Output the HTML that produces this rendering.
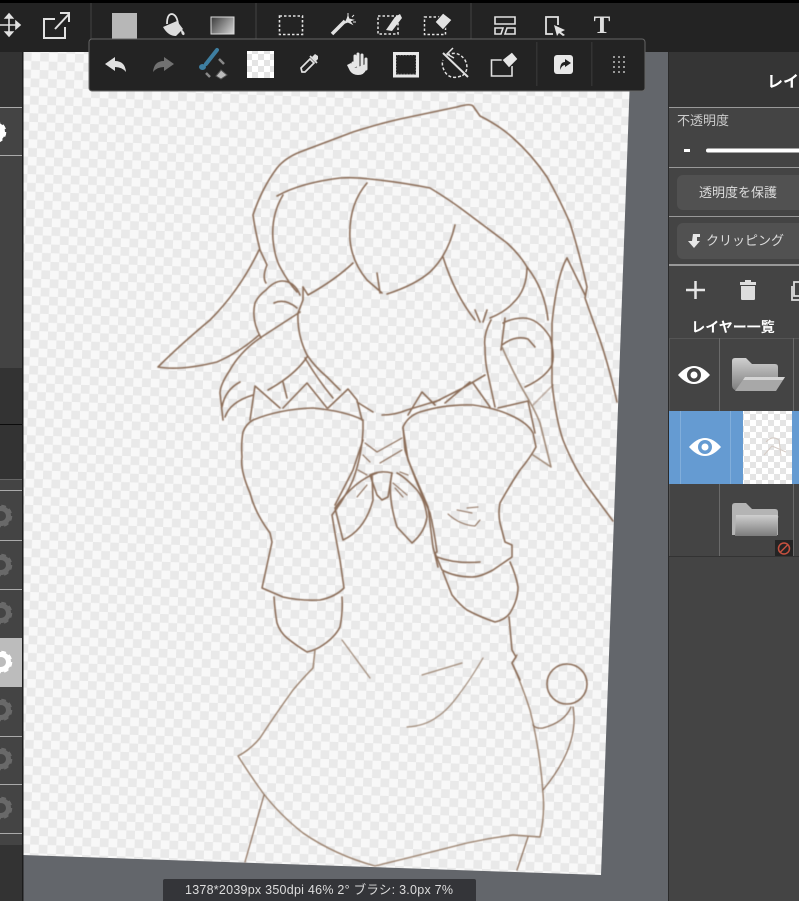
<!DOCTYPE html>
<html><head><meta charset="utf-8"><style>
html,body{margin:0;padding:0;background:#63666b}
body{width:799px;height:901px;overflow:hidden;position:relative}
svg{position:absolute;left:0;top:0}
text{font-family:"Liberation Sans","Noto Sans CJK JP",sans-serif}
</style></head><body>
<svg width="799" height="901" viewBox="0 0 799 901" xmlns="http://www.w3.org/2000/svg">
<defs>
<pattern id="ck" width="17.4" height="17.4" patternUnits="userSpaceOnUse" patternTransform="translate(23 52) rotate(2)">
<rect width="17.4" height="17.4" fill="#f8f8f8"/><rect width="8.7" height="8.7" fill="#e9e9e9"/><rect x="8.7" y="8.7" width="8.7" height="8.7" fill="#e9e9e9"/>
</pattern>
<pattern id="ck2" width="12" height="12" patternUnits="userSpaceOnUse"><rect width="12" height="12" fill="#fff"/><rect width="6" height="6" fill="#e4e4e4"/><rect x="6" y="6" width="6" height="6" fill="#e4e4e4"/></pattern>
<linearGradient id="gr" x1="0" x2="1" y1="0.2" y2="0.8"><stop offset="0" stop-color="#444"/><stop offset="1" stop-color="#ccc"/></linearGradient>
<linearGradient id="fd" x1="0" x2="0" y1="0" y2="1"><stop offset="0" stop-color="#cfcfcf"/><stop offset="1" stop-color="#7c7c7c"/></linearGradient>
<filter id="sf"><feGaussianBlur stdDeviation="0.4"/></filter>
<g id="gear"><circle r="7.5" fill="none" stroke="currentColor" stroke-width="5"/><circle r="9.5" fill="none" stroke="currentColor" stroke-width="3.6" stroke-dasharray="4.4 3.06"/></g>
<g id="eye"><path d="M-16 0Q0-18 16 0Q0 18-16 0Z" fill="#fff"/></g>
</defs>

<!-- canvas background -->
<rect width="799" height="901" fill="#63666b"/>
<path d="M23 50H631L601 875L23 855Z" fill="url(#ck)"/>

<!-- line art -->
<g fill="none" stroke="#8b6d58" stroke-width="1.6" stroke-linecap="round" stroke-linejoin="round" filter="url(#sf)">
<!-- hat outer -->
<path d="M266 283Q262 277 267 265L260 250Q255 230 253 215Q262 188 277 168Q285 158 300 152L353 132Q378 124 400 119L457 107Q470 103 473 106L480 116Q500 126 513 138Q532 155 547 177Q560 200 570 223Q580 255 587 287L585 298Q592 318 600 340Q610 370 617 402"/>
<path d="M259 250Q240 290 210 320Q180 345 158 367Q180 371 217 362Q240 352 259 335"/>
<path d="M277 196Q300 183 340 178Q355 177 370 179Q400 182 430 188Q450 200 467 213L507 243Q520 255 527 267Q545 290 548 320"/>
<path d="M283 195Q271 215 273 240Q275 258 280 267Q288 282 297 292"/>
<path d="M367 183Q348 205 350 240Q352 262 367 280L382 293"/>
<path d="M377 273L380 293M387 294Q415 285 430 272Q448 255 455 225"/>
<path d="M353 263Q335 280 308 295L303 287"/>
<path d="M443 257Q455 295 475 320M475 310L480 322M487 310L483 322M490 318Q505 312 513 303Q527 290 527 267"/>
<!-- face left -->
<path d="M303 287V300L298 313Q297 335 307 355Q315 367 327 377L340 390M305 358Q318 380 333 398"/>
<path d="M261 338Q251 320 255 303Q258 296 266 290Q277 278 288 282Q296 285 300 295M274 303Q285 298 297 308"/>
<path d="M300 312Q280 325 260 338Q240 352 230 370Q220 385 220 393L223 420M240 382Q225 390 222 407M253 395Q230 402 225 417"/>
<path d="M307 357Q295 375 268 390M283 382L287 398"/>
<path d="M250 420L255 386L280 408M283 408L307 383L327 408M328 408L348 389L357 400L362 420M357 402L373 412M382 415Q395 415 407 410L440 400"/>
<!-- left arm -->
<path d="M243 432Q246 424 253 420Q280 409 313 408Q345 411 363 420L363 430Q362 455 353 480Q345 498 332 515Q336 540 340 560L344 588Q335 597 320 600Q300 601 283 597L262 588L272 542L270 533Q255 513 250 493Q240 470 242 457Q241 443 243 432Z"/>
<path d="M274 597Q275 612 277 623Q280 632 287 638Q297 646 307 652Q316 650 323 645Q335 637 340 627Q343 612 342 597"/>
<path stroke="#9a806c" stroke-width="1.4" d="M315 650Q314 660 313 668Q303 678 293 690Q275 715 260 738Q250 750 238 756Q250 775 263 793Q280 815 303 833Q335 855 375 866Q420 855 467 843Q490 838 513 835L540 837Q545 815 543 793Q540 750 530 710Q522 685 512 663L517 655"/>
<path d="M342 640L370 678M422 675L462 663M483 658Q470 680 460 693Q448 710 437 717Q425 726 407 727" stroke="#a08a78" stroke-width="1.200"/>
<!-- tail -->
<circle cx="567" cy="684" r="20"/>
<path d="M571 707Q565 722 543 728Q536 729 533 725M573 707Q580 745 543 790" stroke-width="1.200"/>
<path d="M264 795L245 862M528 837L517 870" stroke-width="1.200"/>
<!-- right strand -->
<path d="M567 258Q557 275 552 323V383Q556 420 563 440Q575 470 590 490L613 521"/>
<path d="M567 258L585 295"/>
<path d="M503 323Q513 318 523 318Q538 318 550 337Q555 355 552 365Q545 378 525 387M502 345Q515 335 528 339L535 347M505 318L501 350"/>
<path d="M502 347Q512 370 523 390Q535 410 540 423L551 467L533 455" stroke="#a08a78"/>
<path d="M553 385L533 405" stroke-opacity=".5"/>
<!-- neck -->
<path d="M491 320Q483 335 485 347Q485 360 487 370L495 407M485 375L463 388L433 403M470 382L445 403M473 383L490 407"/>
<path d="M408 415L422 392L435 405M498 408L528 401L535 433"/>
<!-- right arm -->
<path d="M403 427Q408 416 420 412Q445 404 473 405Q495 408 510 415Q528 423 533 433L536 447Q530 458 520 470Q510 485 500 503Q498 513 500 523L505 542L512 545L512 557L493 570Q480 577 472 577Q455 577 442 570L435 553L437 552Q434 530 430 513Q422 495 417 483Q408 460 405 450Z"/>
<path d="M437 557Q455 564 480 562M443 572Q448 585 452 595Q460 605 467 610Q480 617 495 622Q505 620 510 613Q518 600 518 587Q516 575 510 562"/>
<path d="M509 617L512 650L516 657L512 663L520 680"/>
<path d="M448 514Q460 525 475 526L480 520M457 510L472 513M467 508L478 507" stroke-width="1"/>
<!-- ribbon -->
<path d="M377 473Q355 480 335 508L343 540Q365 530 373 500L372 475"/>
<path d="M370 475L377 495L382 500L388 497L392 473Q380 470 370 475"/>
<path d="M392 473Q387 495 397 527L412 543Q425 532 427 517Q425 500 417 490Q405 477 397 473"/>
<path d="M365 443L377 452L402 438M363 455L370 462M402 450L380 463M358 470L367 475M400 472L408 475M357 497L367 485M393 483L407 495M395 488L403 497" stroke-width="1.100"/>
<path d="M403 428L408 460L428 507L433 547L438 567M363 440L353 470L335 505"/>
</g>

<!-- top bar -->
<rect width="799" height="52" fill="#232323"/>
<rect width="799" height="3" fill="#000"/>
<rect x="90" y="3" width="2" height="36" fill="#333"/><rect x="255" y="3" width="2" height="36" fill="#333"/><rect x="470" y="3" width="2" height="36" fill="#333"/>

<!-- top icons -->
<g fill="none" stroke="#e2e2e2" stroke-width="1.6">
<path d="M0 25H18M9 16V34M9 14l-3.500 4h7zM9 36l-3.500-4h7zM20 25l-4-3.500v7z" fill="#e2e2e2"/>
<path d="M55 19H44V38H65V27" stroke-width="2"/><path d="M55 29L69 14M60 13H69V22" stroke-width="2"/>
<rect x="112" y="13" width="25" height="26" fill="#b7b7b7" stroke="none"/>
<path d="M163 27L177 21L183 29L176 36Q168 36 163 27Z" fill="#ddd" stroke="none"/><path d="M167 24Q167 14 172 14Q177 15 178 24" stroke-width="1.800"/><path d="M181 29Q186 33 184 35Q181 36 181 29Z" fill="#ddd" stroke="none"/>
<rect x="211" y="17" width="23" height="17" fill="url(#gr)" stroke="#ddd" stroke-width="1"/>
<rect x="279.500" y="16" width="23" height="18.500" stroke-dasharray="2.500 2" stroke-width="1.600"/>
<path d="M332 34L345 21" stroke-width="3.500"/><path d="M347 19l1-3 1 3 4 1-3 1 2 3-4-2-3 1zM348 13v3M354 15l-2 2M356 22h-3" stroke-width="1" fill="#e2e2e2"/>
<rect x="378" y="16" width="20" height="18" stroke-dasharray="2.500 2" stroke-width="1.500"/>
<path d="M386 30L395 17L400 14L402 18L392 31Z" fill="#e2e2e2" stroke="none"/>
<rect x="424.500" y="17" width="21" height="17.500" stroke-dasharray="2.500 2" stroke-width="1.500"/>
<path d="M435 22L443 13L452 20L443 30Z" fill="#e2e2e2" stroke="#222" stroke-width="1"/>
<path d="M495 17H515V24H495ZM495 28H503L501 34H495ZM507 28H515V34H505Z" stroke-width="1.600"/>
<path d="M553 34H546V17H558V25" stroke-width="1.800"/><path d="M554 25L565 30L561 32L565 35L563 36L559 33L557 36Z" fill="#e2e2e2" stroke="none"/>
<text x="602" y="33" text-anchor="middle" font-size="25" font-weight="700" fill="#dedede" stroke="none" style="font-family:'Liberation Serif',serif">T</text>
</g>

<!-- left panel -->
<rect x="0" y="52" width="23" height="849" fill="#333"/>
<rect x="0" y="107" width="22" height="48" fill="#444"/>
<rect x="0" y="155" width="22" height="213" fill="#434343"/>
<rect x="0" y="368" width="22" height="56" fill="#333"/>
<rect x="0" y="424" width="22" height="1" fill="#0c0c0c"/>
<rect x="0" y="479" width="22" height="366" fill="#444"/>
<g fill="#aaa">
<rect y="107" width="22" height="1"/><rect y="155" width="22" height="1"/>
<rect y="479" width="22" height="1" fill="#666"/><rect y="490" width="22" height="1"/><rect y="540" width="22" height="1"/><rect y="589" width="22" height="1"/><rect y="736" width="22" height="1"/><rect y="784" width="22" height="1"/><rect y="833" width="22" height="1"/>
</g>
<rect x="0" y="638" width="22" height="49" fill="#bcbcbc"/>
<rect x="22" y="52" width="1.500" height="849" fill="#1c1c1c"/>
<g color="#fff"><use href="#gear" x="-5" y="132"/></g>
<g color="#696969"><use href="#gear" x="1" y="516"/><use href="#gear" x="1" y="565"/><use href="#gear" x="1" y="613"/><use href="#gear" x="1" y="710"/><use href="#gear" x="1" y="759"/><use href="#gear" x="1" y="808"/></g>
<g color="#fff"><use href="#gear" x="1" y="662"/></g>

<!-- right panel -->
<rect x="668" y="52" width="131" height="849" fill="#444"/>
<rect x="668" y="52" width="1" height="849" fill="#2a2a2a"/>
<rect x="669" y="52" width="130" height="55" fill="#353535"/>
<text x="767" y="87" font-size="16" font-weight="700" fill="#fff">レイ</text>
<g fill="#999"><rect x="669" y="107" width="130" height="1"/><rect x="669" y="167" width="130" height="1"/><rect x="669" y="216" width="130" height="1"/><rect x="669" y="264" width="130" height="2"/></g>
<text x="677" y="125" font-size="13" fill="#ccc">不透明度</text>
<rect x="684" y="149" width="6" height="3" fill="#fff"/>
<rect x="706" y="148.500" width="100" height="4" rx="2" fill="#fff"/>
<rect x="677" y="175" width="130" height="35" rx="6" fill="#515151"/>
<text x="738" y="197" text-anchor="middle" font-size="13" fill="#ddd">透明度を保護</text>
<rect x="677" y="223" width="130" height="36" rx="6" fill="#515151"/>
<path d="M693 234H700V237H697V241H700L694 248L688 241H692Z" fill="#e6e6e6"/>
<text x="706" y="245" font-size="13" fill="#ddd">クリッピング</text>
<path d="M686 290H705M695.500 281V299" stroke="#e6e6e6" stroke-width="2.500"/>
<path d="M745 280H751V282H756V285H740V282H745ZM741 286H755V299Q755 300 753 300H743Q741 300 741 299Z" fill="#ddd"/>
<path d="M799 282H794V296H799M792 286V300H799" fill="none" stroke="#ddd" stroke-width="1.800"/>
<text x="733" y="332" text-anchor="middle" font-size="14" font-weight="700" fill="#fff">レイヤー一覧</text>

<!-- layers -->
<rect x="669" y="338" width="130" height="1" fill="#555"/>
<rect x="719" y="338" width="1" height="218" fill="#6a6a6a"/><rect x="793" y="338" width="1" height="218" fill="#6a6a6a"/>
<rect x="669" y="338" width="1" height="218" fill="#555"/>
<use href="#eye" x="694" y="375"/><circle cx="694" cy="375" r="7" fill="#444"/><circle cx="694" cy="375" r="3.500" fill="#fff"/>
<path d="M732 361Q732 358 735 358H746L752 364H775Q778 364 778 367V388L738 391Q732 390 732 385Z" fill="url(#fd)"/>
<path d="M745 377H785L776 391H735Z" fill="#a8a8a8"/><path d="M745 377H785L783 380H743Z" fill="#d4d4d4"/>
<rect x="669" y="411" width="130" height="73" fill="#659bd2"/>
<rect x="680" y="411" width="1" height="73" fill="#81aedb"/><rect x="730" y="411" width="1" height="73" fill="#81aedb"/>
<rect x="743" y="411" width="49" height="73" fill="url(#ck2)"/>
<path d="M766 442Q772 435 779 440L781 456M764 455L772 446L786 452" stroke="#d5ccc6" stroke-width="1" fill="none"/>
<use href="#eye" x="705" y="447"/><circle cx="705" cy="447" r="7" fill="#659bd2"/><circle cx="705" cy="447" r="3.500" fill="#fff"/>
<path d="M732 506Q732 503 735 503H746L752 509H775Q778 509 778 512V535H732Z" fill="#b4b4b4"/>
<path d="M736 515H776Q779 515 778 518L777 536H735Z" fill="url(#fd)"/>
<rect x="775" y="540" width="18" height="17" fill="#242424"/>
<circle cx="784" cy="548.500" r="5.500" fill="none" stroke="#c5503f" stroke-width="1.500"/><path d="M780 552.500L788 544.500" stroke="#c5503f" stroke-width="1.500"/>
<rect x="669" y="556" width="130" height="1" fill="#333"/>

<!-- floating toolbar -->
<rect x="89" y="39" width="556" height="52" rx="3" fill="#232323" stroke="#666" stroke-width="1"/>
<rect x="536" y="42" width="1.500" height="44" fill="#333"/><rect x="591" y="42" width="1.500" height="44" fill="#333"/>
<path d="M105 64L115 57V61Q125 61 126 72Q122 67 115 67V71Z" fill="#e0e0e0"/>
<path d="M174 64L164 57V61Q154 61 153 72Q157 67 164 67V71Z" fill="#717171"/>
<path d="M206 64L217 50" stroke="#3e7ea0" stroke-width="4" stroke-linecap="round"/><ellipse cx="202.500" cy="67" rx="3.500" ry="3" fill="#3e7ea0"/>
<path d="M219 59L224 64M206 73L210 77" stroke="#888" stroke-width="2.500"/>
<path d="M216 76L221 70L227 75L221 79Z" fill="#bbb" stroke="#555" stroke-width="1"/>
<rect x="247" y="51" width="27" height="27" fill="url(#ck2)"/>
<g fill="none" stroke="#e0e0e0" stroke-width="1.700"><path d="M302 72L301 68L310 59L314 63L305 72Z"/><path d="M310 56L317 63"/></g><path d="M312 57L315 54L318 56L318 59L316 61Z" fill="#e0e0e0"/>
<path d="M353 63V69M355 56V66M358 54V66M362 55V66M366 59V69" stroke="#e6e6e6" stroke-width="3" stroke-linecap="round"/><path d="M347 65L351 63L355 68L366 64L366 70Q364 75 358 75Q353 75 350 71Z" fill="#e6e6e6"/>
<rect x="394.500" y="53.500" width="23" height="22.500" fill="#222" stroke="#e8e8e8" stroke-width="3"/><rect x="396.500" y="55.500" width="19" height="18.500" fill="none" stroke="#555" stroke-width="1" stroke-dasharray="1.500 1.500"/>
<g fill="none" stroke="#e0e0e0" stroke-width="1.500"><path d="M447 55Q458 50 465 60Q470 70 462 76" stroke-dasharray="3 2"/><path d="M461 76Q450 80 445 72Q441 65 443 60" stroke-dasharray="3 2"/><path d="M443 53L468 77" stroke-width="2"/><path d="M453 48L447 54L454 58" stroke-width="1.500"/></g>
<g fill="none" stroke="#e0e0e0" stroke-width="1.600"><path d="M503 60H491.500V76H512V66"/></g><path d="M502 60L512 52L518 59L509 68Z" fill="#e6e6e6" stroke="#222"/>
<rect x="554" y="55" width="19" height="19" rx="3" fill="#e8e8e8"/><path d="M560 70Q560 62 565 62V59L571 63L565 67V65Q562 65 560 70Z" fill="#222"/>
<g fill="#bdbdbd"><circle cx="614" cy="57" r="1"/><circle cx="619" cy="57" r="1"/><circle cx="624" cy="57" r="1"/><circle cx="614" cy="62" r="1"/><circle cx="619" cy="62" r="1"/><circle cx="624" cy="62" r="1"/><circle cx="614" cy="67" r="1"/><circle cx="619" cy="67" r="1"/><circle cx="624" cy="67" r="1"/><circle cx="614" cy="72" r="1"/><circle cx="619" cy="72" r="1"/><circle cx="624" cy="72" r="1"/></g>

<!-- status -->
<rect x="163" y="879" width="313" height="24" rx="2" fill="#343539"/>
<text x="185" y="894" font-size="12.500" fill="#ddd" textLength="268" lengthAdjust="spacing">1378*2039px 350dpi 46% 2° ブラシ: 3.0px 7%</text>
</svg>
</body></html>
